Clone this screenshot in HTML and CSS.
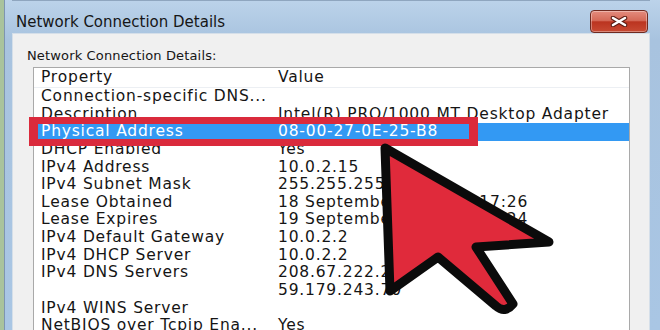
FILE: index.html
```html
<!DOCTYPE html>
<html lang="en">
<head>
  <meta charset="UTF-8" />
  <title>Network Connection Details</title>
  <link rel="stylesheet" href="styles.css">
</head>
<body>
<div class="window">
  <div class="titlebar">
    <span class="title">Network Connection Details</span>
    <button class="close-btn">
      <svg width="18" height="11" viewBox="0 0 18 11">
        <path d="M3 2 L15 9 M15 2 L3 9" stroke="#5b1d14" stroke-width="4.5" stroke-linecap="round"/>
        <path d="M3 2 L15 9 M15 2 L3 9" stroke="#fff" stroke-width="2.5" stroke-linecap="round"/>
      </svg>
    </button>
  </div>

  <div class="client">
    <div class="label">Network Connection Details:</div>
    <div class="list">
      <div class="row head"><span>Property</span><span>Value</span></div>
      <div class="row"><span>Connection-specific DNS...</span><span></span></div>
      <div class="row"><span>Description</span><span>Intel(R) PRO/1000 MT Desktop Adapter</span></div>
      <div class="row selected"><span>Physical Address</span><span>08-00-27-0E-25-B8</span></div>
      <div class="row"><span>DHCP Enabled</span><span>Yes</span></div>
      <div class="row"><span>IPv4 Address</span><span>10.0.2.15</span></div>
      <div class="row"><span>IPv4 Subnet Mask</span><span>255.255.255.0</span></div>
      <div class="row"><span>Lease Obtained</span><span>18 September 2013 10:17:26</span></div>
      <div class="row"><span>Lease Expires</span><span>19 September 2013 10:17:24</span></div>
      <div class="row"><span>IPv4 Default Gateway</span><span>10.0.2.2</span></div>
      <div class="row"><span>IPv4 DHCP Server</span><span>10.0.2.2</span></div>
      <div class="row"><span>IPv4 DNS Servers</span><span>208.67.222.222</span></div>
      <div class="row"><span></span><span>59.179.243.70</span></div>
      <div class="row"><span>IPv4 WINS Server</span><span></span></div>
      <div class="row"><span>NetBIOS over Tcpip Ena...</span><span>Yes</span></div>
    </div>
  </div>
</div>

<!-- tutorial overlay: highlight box + big pointer -->
<div class="highlight"></div>
<svg class="pointer" width="660" height="330" viewBox="0 0 660 330">
  <path d="M385 148 L390 291 L438 257 L496 306 Q505 314 513 304 L476 247 L549 242 Z"
        fill="#e02a3b" stroke="#0b0b0b" stroke-width="9" stroke-linejoin="round"/>
</svg>
</body>
</html>
```

FILE: styles.css
```css
body {
  margin: 0;
  width: 660px;
  height: 330px;
  overflow: hidden;
  position: relative;
  background-color: #a9c39c;
  font-family: "DejaVu Sans", sans-serif;
}

.window {
  margin-left: 4px;
  height: 330px;
  background: linear-gradient(#bcd3ea, #a8c3df 40px, #a9c6e4);
  border-left: 1px solid #7e95b0;
  padding: 0 10px 0 7px;
  box-sizing: border-box;
  overflow: hidden;
}

.titlebar {
  height: 33px;
  display: flex;
  justify-content: space-between;
  align-items: flex-end;
  border-top: 1px solid #8fa6bf;
  box-sizing: border-box;
}

.title {
  font-size: 15px;
  color: #161616;
  padding-left: 4px;
  align-self: center;
  margin-top: 10px;
}

.close-btn {
  width: 58px;
  height: 23px;
  margin-right: 2px;
  padding: 0;
  border: 1px solid #6f2a20;
  border-radius: 4px;
  background: linear-gradient(#e48c7e, #d56a58 45%, #bb3420 52%, #c84a33);
  box-shadow: inset 0 0 0 1px rgba(255, 255, 255, 0.35);
  display: flex;
  align-items: center;
  justify-content: center;
}

.client {
  height: 297px;
  background-color: #f0f0f0;
  border: 1px solid #d5dfe9;
  border-bottom: none;
  padding: 14px 19px 0 14px;
  box-sizing: border-box;
  overflow: hidden;
}

.label {
  font-size: 13px;
  letter-spacing: 0.15px;
  color: #161616;
  line-height: 16px;
  margin-bottom: 3px;
}

.list {
  margin-left: 6px;
  background-color: #fff;
  border: 1px solid #a9a9a9;
  border-bottom: none;
  height: 264px;
  overflow: hidden;
}

.row {
  display: grid;
  grid-template-columns: 237px 1fr;
  height: 17.65px;
  line-height: 17.65px;
  padding-left: 7px;
  font-size: 15.5px;
  letter-spacing: 0.8px;
  color: #151515;
  white-space: nowrap;
}

.row.head {
  height: 19px;
  line-height: 19px;
  border-bottom: 1px solid #eceff3;
}

.row.selected {
  background-color: #3399f3;
  color: #fff;
}

.highlight {
  position: absolute;
  left: 29px;
  top: 117px;
  width: 431px;
  height: 15px;
  border-style: solid;
  border-width: 7px 9px;
  border-color: #da2a3c;
}

.pointer {
  position: absolute;
  left: 0;
  top: 0;
}
```
